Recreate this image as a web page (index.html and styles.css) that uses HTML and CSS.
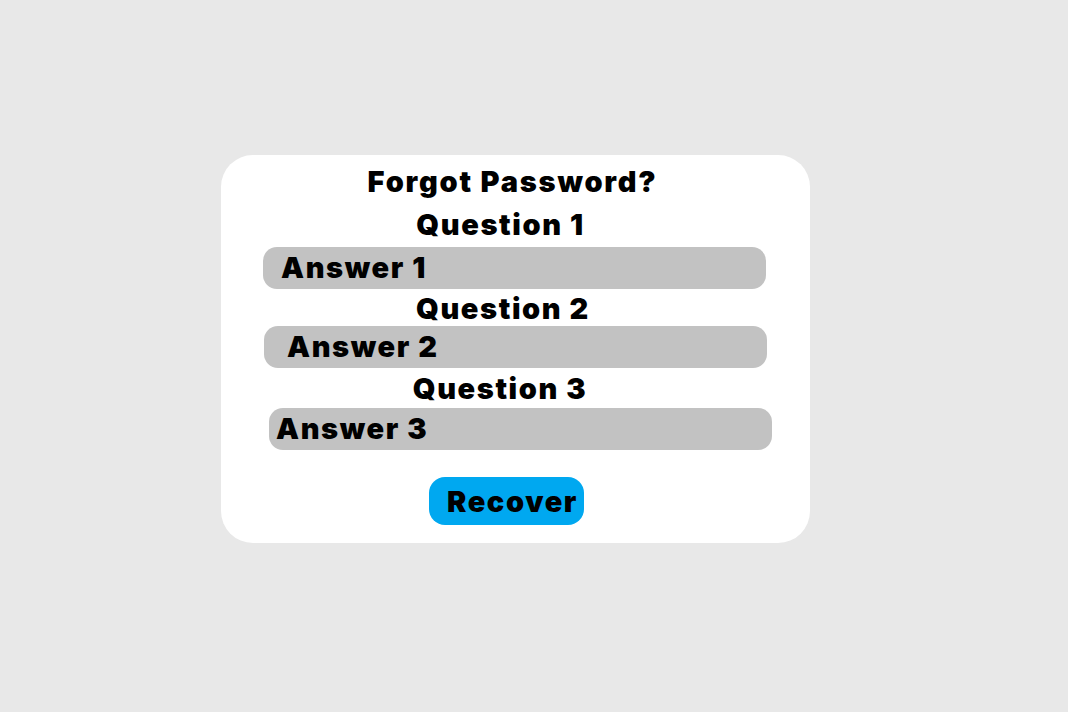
FILE: index.html
```html
<!DOCTYPE html>
<html lang="en">
<head>
<meta charset="utf-8">
<title>Forgot Password</title>
<link rel="stylesheet" href="styles.css">
</head>
<body>
  <form class="card">
    <h1 class="title">Forgot Password?</h1>
    <label class="question q1">Question 1</label>
    <div class="answer a1">Answer 1</div>
    <label class="question q2">Question 2</label>
    <div class="answer a2">Answer 2</div>
    <label class="question q3">Question 3</label>
    <div class="answer a3">Answer 3</div>
    <button type="button" class="recover">Recover</button>
  </form>
</body>
</html>
```
FILE: styles.css
```css
html, body {
  margin: 0;
  padding: 0;
  background: #e8e8e8;
  width: 1068px;
  height: 712px;
  overflow: hidden;
}
body {
  font-family: Inter, Roboto, "Liberation Sans", sans-serif;
  font-weight: 900;
  color: #000;
  letter-spacing: 1.6px;
}
.card {
  box-sizing: border-box;
  margin: 155px 0 0 221px;
  width: 589px;
  height: 388px;
  background: #fff;
  border-radius: 32px;
  display: flex;
  flex-direction: column;
  align-items: center;
  padding-top: 10px;
}
.title {
  margin: 0 6px 0 0;
  font-size: 29px;
  line-height: 34px;
  font-weight: 900;
  letter-spacing: 1.8px;
}
.question {
  display: block;
  font-size: 29px;
  line-height: 34px;
}
.q1 { margin: 9px 30px 5px 0; }
.q2 { margin: 3px 25px 0 0; }
.q3 { margin: 4px 31px 2px 0; }
.answer {
  box-sizing: border-box;
  align-self: flex-start;
  width: 503px;
  height: 42px;
  background: #c2c2c2;
  border-radius: 14px;
  font-size: 29px;
  line-height: 42px;
}
.a1 { margin-left: 42px; padding-left: 18px; }
.a2 { margin-left: 43px; padding-left: 23px; }
.a3 { margin-left: 48px; padding-left: 7px; }
.recover {
  margin: 27px 18px 0 0;
  width: 155px;
  height: 48px;
  border: none;
  border-radius: 16px;
  background: #00a8f0;
  font-family: inherit;
  font-weight: 900;
  font-size: 29px;
  letter-spacing: 1.6px;
  color: #000;
  padding: 0 0 0 12px;
}
```
